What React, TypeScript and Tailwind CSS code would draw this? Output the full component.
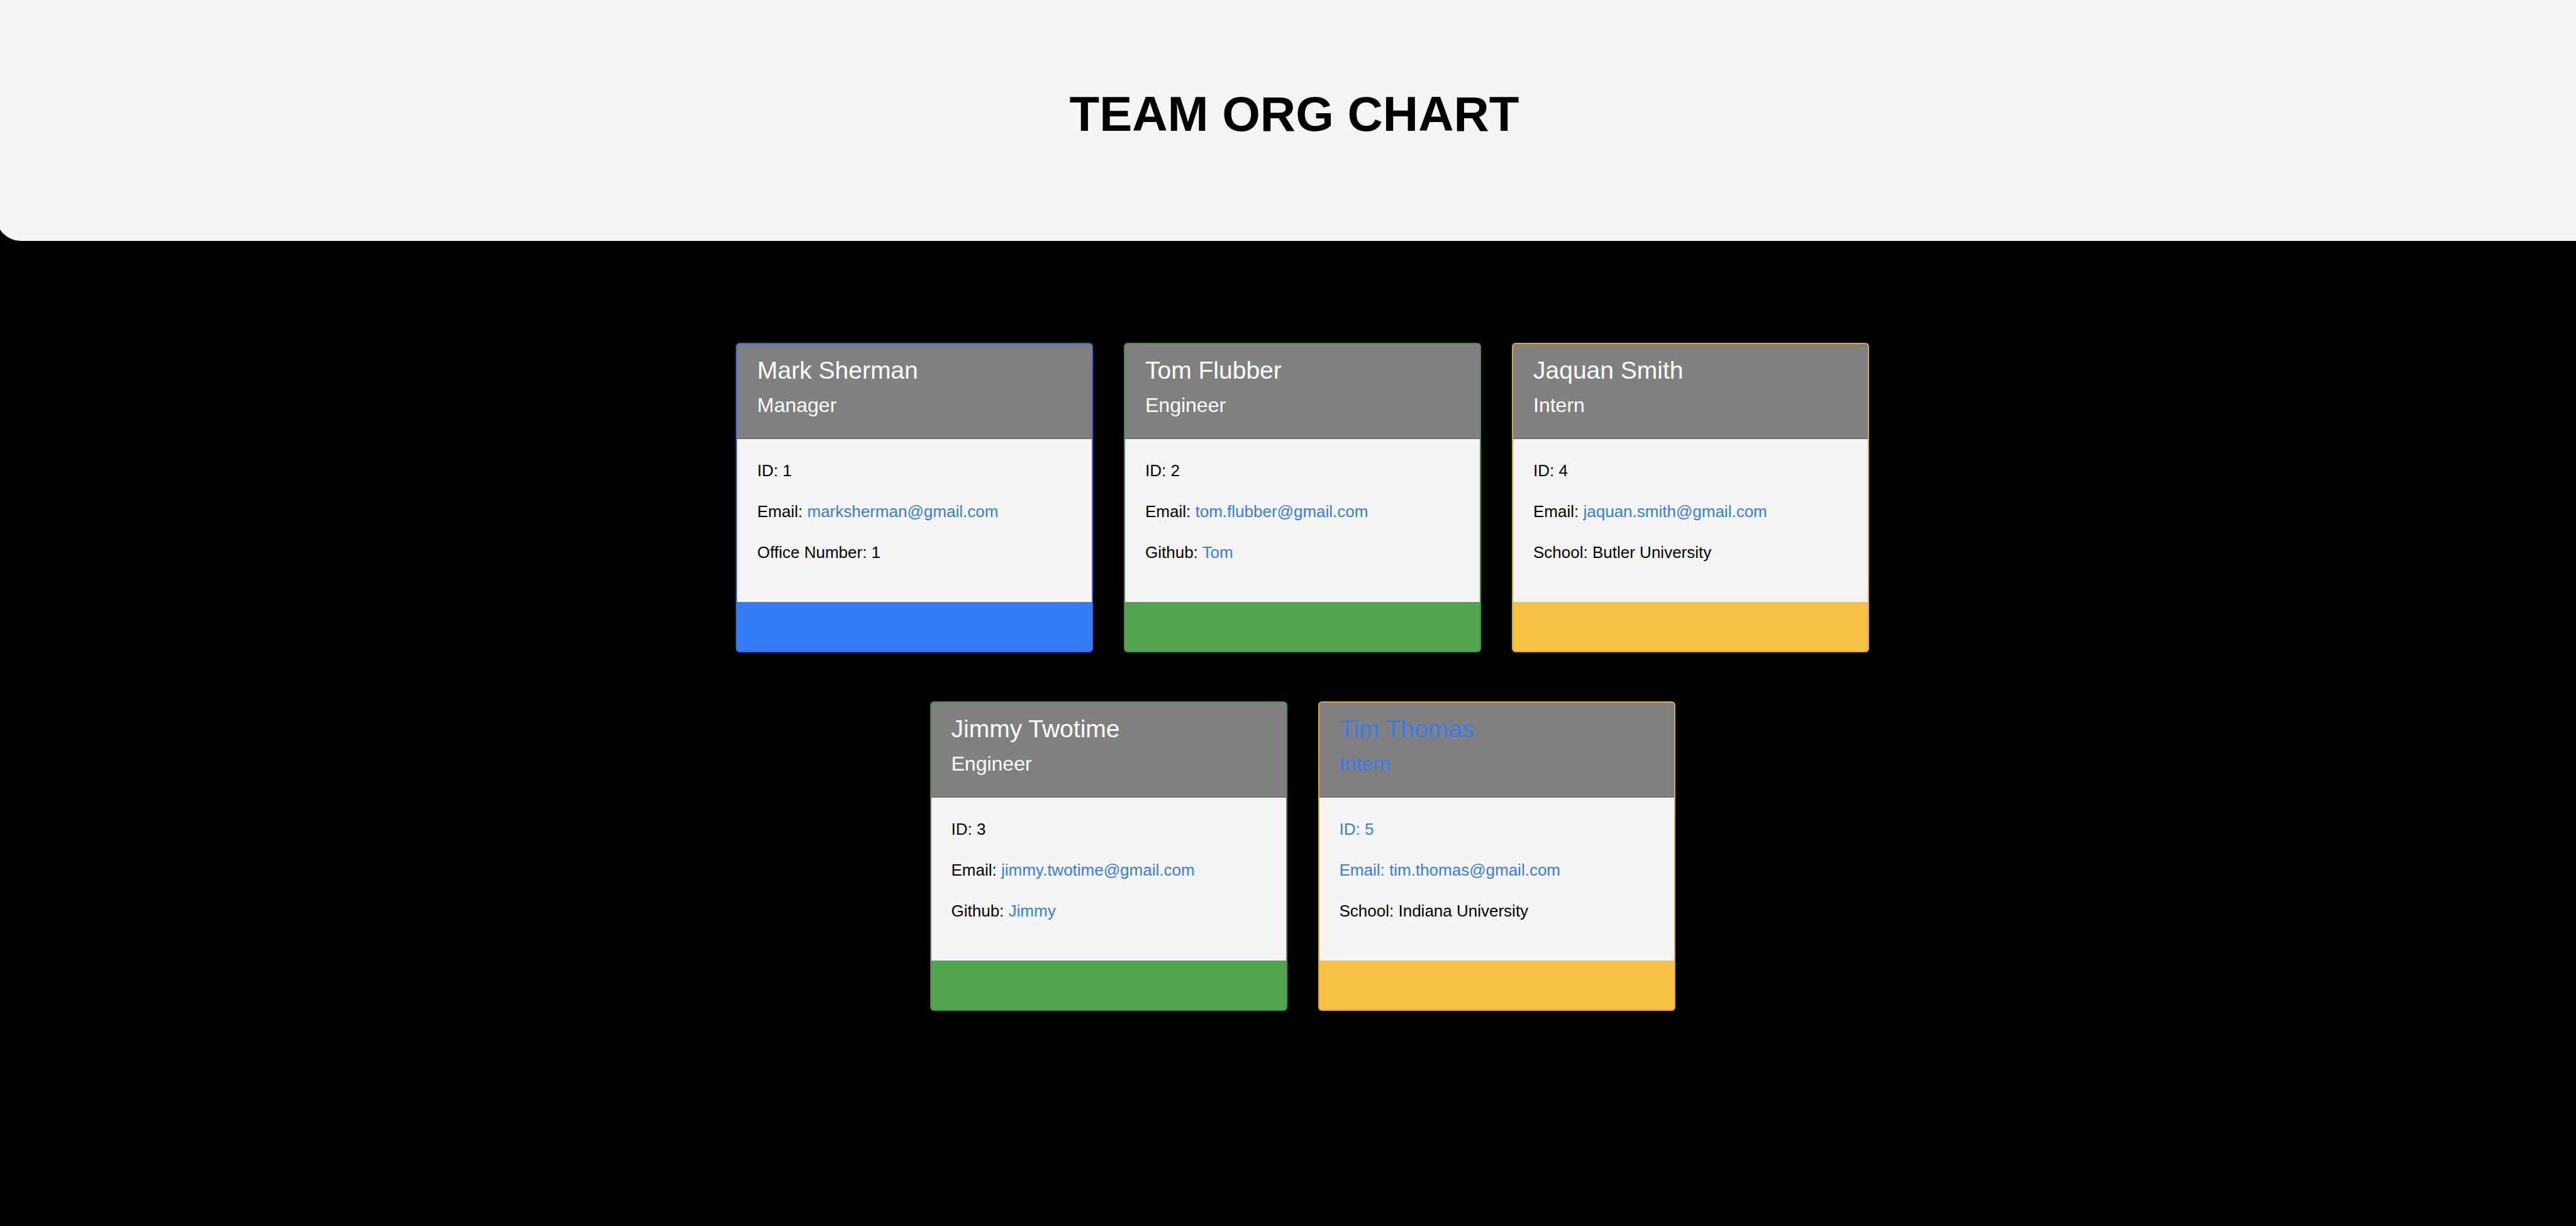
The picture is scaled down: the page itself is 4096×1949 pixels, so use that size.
type Accent = "blue" | "green" | "yellow";

type Member = {
  name: string;
  role: string;
  id: number;
  email: string;
  label: string;
  value: string;
  href?: string;
  accent: Accent;
  linked?: boolean;
};

const accents: Record<Accent, string> = {
  blue: "bg-[#337cf6]",
  green: "bg-[#52a550]",
  yellow: "bg-[#f5c243]",
};

const members: Member[] = [
  { name: "Mark Sherman", role: "Manager", id: 1, email: "marksherman@gmail.com", label: "Office Number", value: "1", accent: "blue" },
  { name: "Tom Flubber", role: "Engineer", id: 2, email: "tom.flubber@gmail.com", label: "Github", value: "Tom", href: "https://github.com/Tom", accent: "green" },
  { name: "Jaquan Smith", role: "Intern", id: 4, email: "jaquan.smith@gmail.com", label: "School", value: "Butler University", accent: "yellow" },
  { name: "Jimmy Twotime", role: "Engineer", id: 3, email: "jimmy.twotime@gmail.com", label: "Github", value: "Jimmy", href: "https://github.com/Jimmy", accent: "green" },
  { name: "Tim Thomas", role: "Intern", id: 5, email: "tim.thomas@gmail.com", label: "School", value: "Indiana University", accent: "yellow", linked: true },
];

function MemberCard({ member }: { member: Member }) {
  const heading = member.linked ? "text-[#337cf6]" : "text-white";
  const detail = member.linked ? "text-[#337cf6]" : "text-black";

  return (
    <article className={`flex w-[568px] flex-col overflow-hidden rounded-md border-2 border-black/[0.125] ${accents[member.accent]}`}>
      <header className={`border-b-2 border-[#707070] bg-[#808080] px-8 pt-[18px] pb-8 ${heading}`}>
        <h2 className="mb-[13px] text-[39px] leading-[47px]">{member.name}</h2>
        <h3 className="text-[32px] leading-[39px]">{member.role}</h3>
      </header>
      <div className="flex flex-col gap-[26px] bg-[#f5f5f5] px-8 pt-[31px] pb-[59px] text-[26px] leading-[39px]">
        <p className={detail}>ID: {member.id}</p>
        <p className={detail}>
          Email:{" "}
          <a href={`mailto:${member.email}`} className="text-[#337cf6]">
            {member.email}
          </a>
        </p>
        <p>
          {member.label}:{" "}
          {member.href ? (
            <a href={member.href} className="text-[#337cf6]">
              {member.value}
            </a>
          ) : (
            member.value
          )}
        </p>
      </div>
      <footer className="h-[78px]" />
    </article>
  );
}

export default function App() {
  return (
    <div className="min-h-screen overflow-x-hidden bg-black font-['Liberation_Sans',Arial,sans-serif] text-black">
      <header className="-ml-[6px] rounded-bl-[39px] bg-[#f5f5f5] pt-[134px] pb-[155px] pl-[26px]">
        <h1 className="text-center text-[78px] leading-[94px] font-bold">TEAM ORG CHART</h1>
      </header>
      <main className="pt-[162px] pb-20 pl-[46px]">
        <div className="mx-auto flex max-w-[1802px] flex-wrap justify-center gap-x-[49px] gap-y-[78px]">
          {members.map((member) => (
            <MemberCard key={member.id} member={member} />
          ))}
        </div>
      </main>
    </div>
  );
}
